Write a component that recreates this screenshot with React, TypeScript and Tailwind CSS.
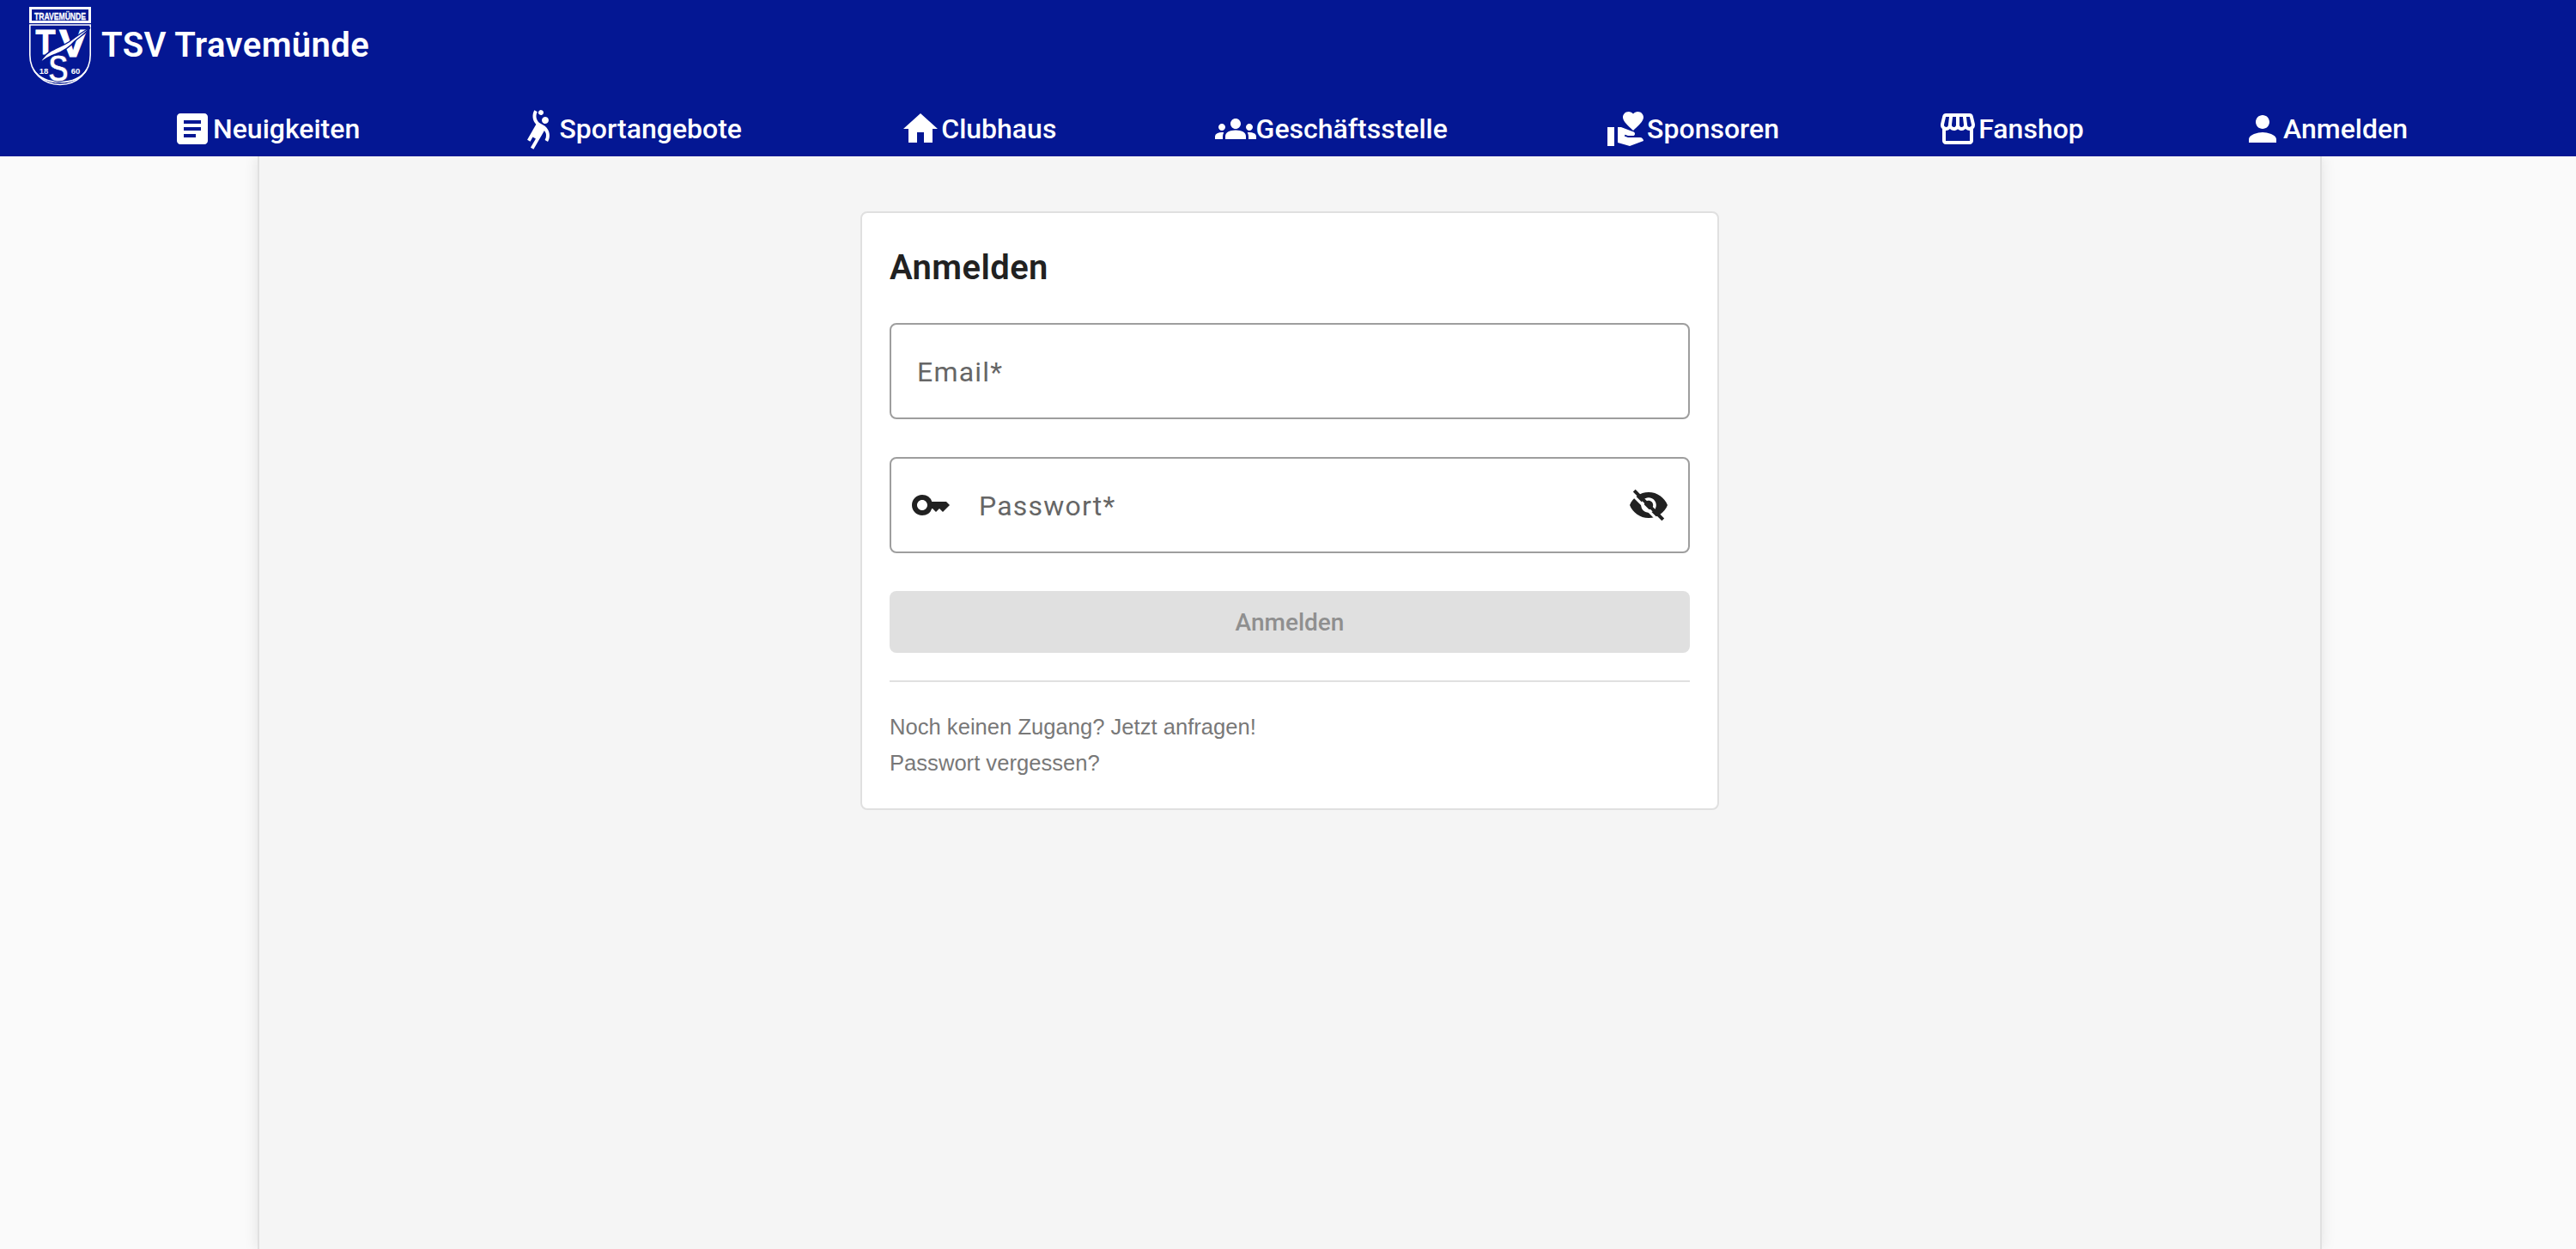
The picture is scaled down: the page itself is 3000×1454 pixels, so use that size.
import React from "react";
import {
  MdArticle,
  MdSportsHandball,
  MdHome,
  MdGroups,
  MdVolunteerActivism,
  MdOutlineStorefront,
  MdPerson,
  MdKey,
} from "react-icons/md";

const nav = [
  { label: "Neuigkeiten", Icon: MdArticle },
  { label: "Sportangebote", Icon: MdSportsHandball },
  { label: "Clubhaus", Icon: MdHome },
  { label: "Geschäftsstelle", Icon: MdGroups },
  { label: "Sponsoren", Icon: MdVolunteerActivism },
  { label: "Fanshop", Icon: MdOutlineStorefront },
  { label: "Anmelden", Icon: MdPerson },
];

function Logo() {
  const sans = "'Liberation Sans', sans-serif";
  return (
    <svg width="72" height="92" viewBox="0 0 72 92" className="shrink-0">
      <rect x="0" y="0" width="72" height="19" fill="#fff" />
      <rect x="3" y="3" width="66" height="13" fill="#041793" />
      <text x="36" y="14.5" textAnchor="middle" fill="#fff" stroke="#fff" strokeWidth="0.3" fontFamily={sans} fontWeight="700" fontSize="11" textLength="60" lengthAdjust="spacingAndGlyphs">TRAVEMÜNDE</text>
      <path d="M0.8 21 H71.2 V56 C71.2 76 56 90.5 36 90.5 C16 90.5 0.8 76 0.8 56 Z" fill="none" stroke="#fff" strokeWidth="1.6" />
      <path d="M5 73 C12 84 24 87.5 36 87.5 C48 87.5 60 84 67 73" fill="none" stroke="#fff" strokeWidth="1.6" />
      <text x="19" y="55" textAnchor="middle" fill="#fff" stroke="#fff" strokeWidth="1" fontFamily={sans} fontWeight="700" fontSize="41" textLength="23" lengthAdjust="spacingAndGlyphs">T</text>
      <text x="51" y="58" textAnchor="middle" fill="#fff" stroke="#fff" strokeWidth="1" fontFamily={sans} fontWeight="700" fontSize="44" textLength="32" lengthAdjust="spacingAndGlyphs">V</text>
      <path d="M71 24 C62 29 54 35 46 41 C40 45 35 46 30 49 C22 52 16 58 12 66 C19 60 25 57 31 55 C39 52 47 47 53 40 C60 34 67 30 71 24 Z" fill="#fff" stroke="#041793" strokeWidth="1.4" />
      <text x="34" y="87" textAnchor="middle" fill="#fff" stroke="#041793" strokeWidth="0.8" fontFamily={sans} fontWeight="700" fontSize="44" textLength="24" lengthAdjust="spacingAndGlyphs">S</text>
      <text x="17" y="78" textAnchor="middle" fill="#fff" fontFamily={sans} fontWeight="700" fontSize="9.5">18</text>
      <text x="54" y="78" textAnchor="middle" fill="#fff" fontFamily={sans} fontWeight="700" fontSize="9.5">60</text>
    </svg>
  );
}

function EyeOff() {
  return (
    <svg width="48" height="48" viewBox="0 0 24 24" className="shrink-0" fill="currentColor">
      <path d="M12 4.5C7 4.5 2.73 7.61 1 12c1.73 4.39 6 7.5 11 7.5s9.27-3.11 11-7.5c-1.73-4.39-6-7.5-11-7.5zM12 16.4c-2.43 0-4.4-1.97-4.4-4.4S9.57 7.6 12 7.6s4.4 1.97 4.4 4.4-1.97 4.4-4.4 4.4zm0-7c-1.44 0-2.6 1.16-2.6 2.6s1.16 2.6 2.6 2.6 2.6-1.16 2.6-2.6-1.16-2.6-2.6-2.6z" />
      <path d="M2.4 5.8 L18.4 21.8" stroke="#fff" strokeWidth="1.6" />
      <path d="M3.6 3.6 L20.4 20.4" stroke="currentColor" strokeWidth="2" />
    </svg>
  );
}

export default function App() {
  return (
    <div className="flex h-[1454px] flex-col overflow-hidden bg-[#fafafa] font-['Roboto',sans-serif]">
      <header className="relative z-10 h-[182px] shrink-0 bg-[#041793] text-white">
        <div className="flex h-[106px] items-center pl-[34px] pt-[2px]">
          <Logo />
          <span className="ml-[12px] -translate-y-[1px] text-[40px] leading-[48px] font-semibold tracking-[0.4px]">TSV Travemünde</span>
        </div>
        <nav className="flex h-[76px] justify-between pl-[200px] pr-[196px] pt-[20px]">
          {nav.map(({ label, Icon }) => (
            <a key={label} className="flex h-[48px] items-center text-[32px] leading-[48px] font-medium">
              <Icon size={48} className="shrink-0" />
              <span>{label}</span>
            </a>
          ))}
        </nav>
      </header>
      <main className="ml-[300px] w-[2404px] flex-1 border-x-2 border-[#e0e0e0] bg-[#f5f5f5] pt-[64px] shadow-[0_0_16px_rgba(0,0,0,0.1)]">
        <section className="mx-auto w-[1000px] rounded-[8px] border-2 border-[#e0e0e0] bg-white p-[32px]">
          <h1 className="mb-[32px] flex h-[64px] items-center text-[40px] leading-[48px] font-semibold tracking-[0.4px] text-[#212121]">Anmelden</h1>
          <div className="flex h-[112px] items-center rounded-[8px] border-2 border-[#9e9e9e] pl-[30px]">
            <span className="pt-[2px] text-[32px] tracking-[1.2px] text-[#666666]">Email*</span>
          </div>
          <div className="mt-[44px] flex h-[112px] items-center rounded-[8px] border-2 border-[#9e9e9e] pl-[22px] pr-[22px] text-[#212121]">
            <MdKey size={48} className="shrink-0" />
            <span className="ml-[32px] flex-1 pt-[2px] text-[32px] tracking-[1.2px] text-[#666666]">Passwort*</span>
            <EyeOff />
          </div>
          <button className="mt-[44px] h-[72px] w-full rounded-[8px] bg-[#e0e0e0] pt-[1px] text-[28px] font-medium text-[#8f8f8f]">Anmelden</button>
          <div className="mt-[32px] border-t-2 border-[#e0e0e0] pt-[31px] font-['Liberation_Sans',sans-serif] text-[25.6px] leading-[42px] text-[#787878]">
            <p>Noch keinen Zugang? Jetzt anfragen!</p>
            <p>Passwort vergessen?</p>
          </div>
        </section>
      </main>
    </div>
  );
}
